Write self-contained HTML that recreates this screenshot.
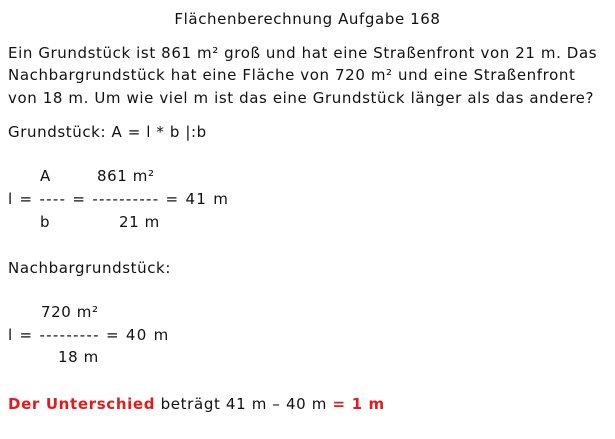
<!DOCTYPE html>
<html><head><meta charset="utf-8"><style>
body{margin:0;width:615px;height:439px;background:#fff;position:relative;overflow:hidden;font-family:"DejaVu Sans",Verdana,sans-serif;font-size:15px;letter-spacing:0.6px;color:#111;}
div{position:absolute;white-space:pre;line-height:18px;}
.r{color:#e31b1b;font-weight:bold;}
.d{letter-spacing:1.3px;}
</style></head><body>
<div style="left:0;width:615px;text-align:center;top:10px">Flächenberechnung Aufgabe 168</div>
<div style="left:8px;top:44px">Ein Grundstück ist 861 m² groß und hat eine Straßenfront von 21 m. Das</div>
<div style="left:8px;top:66px">Nachbargrundstück hat eine Fläche von 720 m² und eine Straßenfront</div>
<div style="left:8px;top:89px">von 18 m. Um wie viel m ist das eine Grundstück länger als das andere?</div>
<div style="left:8px;top:123px">Grundstück: A = l * b |:b</div>
<div style="left:40px;top:167px">A</div>
<div style="left:97px;top:167px">861 m²</div>
<div class="d" style="left:8px;top:190px">l = ---- = ---------- = 41 m</div>
<div style="left:40px;top:213px">b</div>
<div style="left:119px;top:213px">21 m</div>
<div style="left:8px;top:259px">Nachbargrundstück:</div>
<div style="left:41px;top:303px">720 m²</div>
<div class="d" style="left:8px;top:326px">l = --------- = 40 m</div>
<div style="left:58px;top:348px">18 m</div>
<div style="left:8px;top:395px;letter-spacing:0.65px"><span class="r">Der Unterschied</span> beträgt 41 m – 40 m <span class="r">= 1 m</span></div>
</body></html>
